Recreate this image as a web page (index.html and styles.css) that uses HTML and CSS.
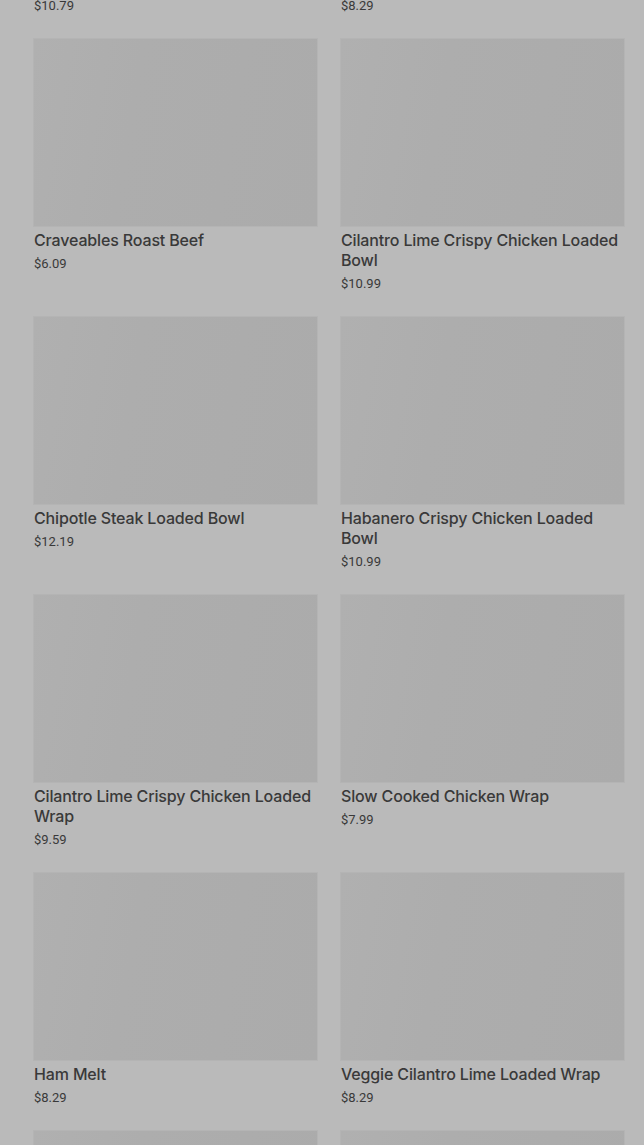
FILE: index.html
```html
<!DOCTYPE html>
<html lang="en">
<head>
  <meta charset="UTF-8">
  <title>Menu</title>
  <link rel="stylesheet" href="styles.css">
</head>
<body>
  <div class="menu-grid">
    <div class="item">
      <div class="item-image"></div>
      <div class="item-name">Chicken Bacon Ranch Melt</div>
      <div class="item-price">$10.79</div>
    </div>
    <div class="item">
      <div class="item-image"></div>
      <div class="item-name">Turkey Melt</div>
      <div class="item-price">$8.29</div>
    </div>

    <div class="item">
      <div class="item-image"></div>
      <div class="item-name">Craveables Roast Beef</div>
      <div class="item-price">$6.09</div>
    </div>
    <div class="item">
      <div class="item-image"></div>
      <div class="item-name">Cilantro Lime Crispy Chicken Loaded Bowl</div>
      <div class="item-price">$10.99</div>
    </div>

    <div class="item">
      <div class="item-image"></div>
      <div class="item-name">Chipotle Steak Loaded Bowl</div>
      <div class="item-price">$12.19</div>
    </div>
    <div class="item">
      <div class="item-image"></div>
      <div class="item-name">Habanero Crispy Chicken Loaded Bowl</div>
      <div class="item-price">$10.99</div>
    </div>

    <div class="item">
      <div class="item-image"></div>
      <div class="item-name">Cilantro Lime Crispy Chicken Loaded Wrap</div>
      <div class="item-price">$9.59</div>
    </div>
    <div class="item">
      <div class="item-image"></div>
      <div class="item-name">Slow Cooked Chicken Wrap</div>
      <div class="item-price">$7.99</div>
    </div>

    <div class="item">
      <div class="item-image"></div>
      <div class="item-name">Ham Melt</div>
      <div class="item-price">$8.29</div>
    </div>
    <div class="item">
      <div class="item-image"></div>
      <div class="item-name">Veggie Cilantro Lime Loaded Wrap</div>
      <div class="item-price">$8.29</div>
    </div>

    <div class="item">
      <div class="item-image"></div>
      <div class="item-name">Spicy Italian</div>
      <div class="item-price">$7.49</div>
    </div>
    <div class="item">
      <div class="item-image"></div>
      <div class="item-name">Black Forest Ham</div>
      <div class="item-price">$6.99</div>
    </div>
  </div>
</body>
</html>
```

FILE: styles.css
```css
body {
  margin: 0;
  background: #bababa;
  font-family: Inter, "Liberation Sans", sans-serif;
  color: #393939;
  overflow: hidden;
}
.menu-grid {
  display: grid;
  grid-template-columns: 283px 283px;
  column-gap: 24px;
  row-gap: 24px;
  padding: 0 20px 0 34px;
  margin-top: -219px;
}
.item-image {
  height: 187px;
  background: linear-gradient(100deg, #b0b0b0 0%, #adadad 35%, #ababab 100%);
  box-shadow: 0 0 0 1px #b4b4b4;
  margin-bottom: 4px;
}
.item-name {
  font-size: 16px;
  font-weight: 500;
  line-height: 20px;
  letter-spacing: -0.15px;
}
.item-price {
  font-family: Roboto, "Liberation Sans", sans-serif;
  font-size: 13px;
  line-height: 18px;
  margin-top: 5px;
}
```
